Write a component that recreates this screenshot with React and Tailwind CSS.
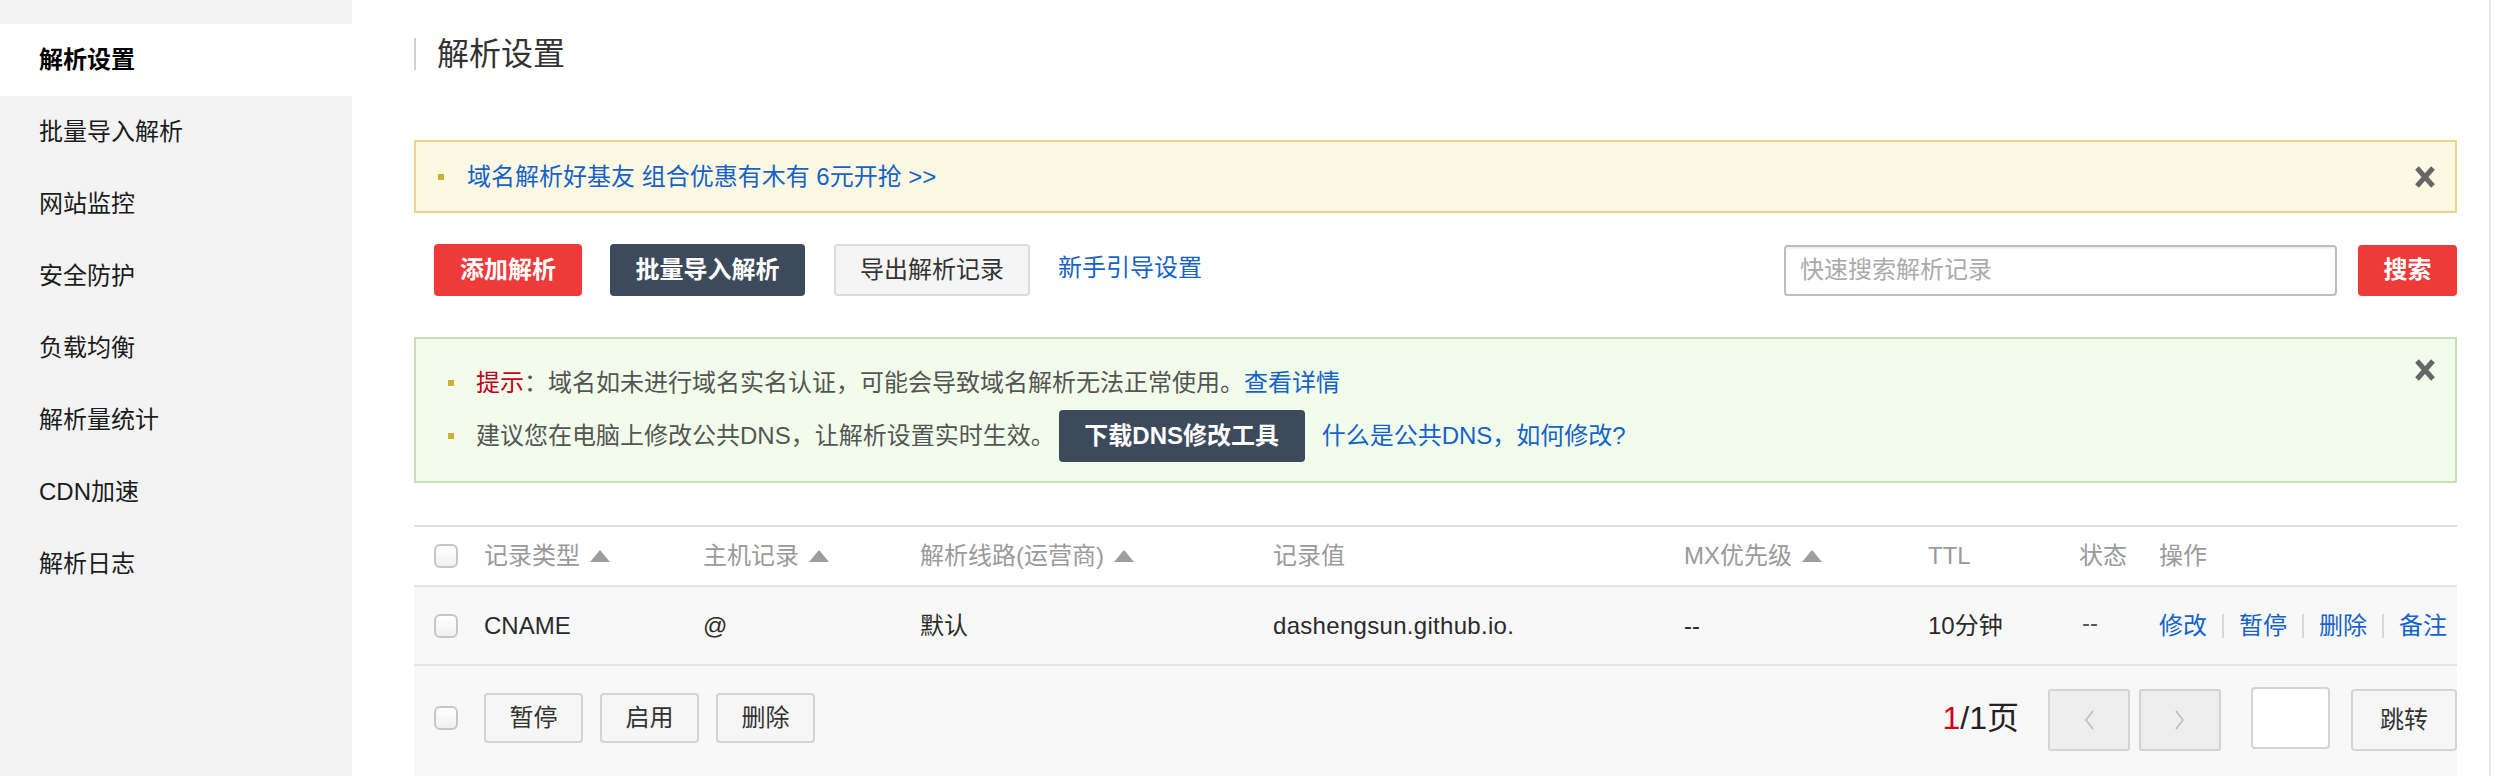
import React from "react";

const menu = ["解析设置", "批量导入解析", "网站监控", "安全防护", "负载均衡", "解析量统计", "CDN加速", "解析日志"];

const cols = "grid grid-cols-[70px_219px_217px_353px_411px_244px_151px_80px_1fr] items-center";

function SortUp() {
  return (
    <svg width="20" height="12" viewBox="0 0 20 12" className="ml-[10px] shrink-0">
      <path d="M10 0L20 12H0Z" fill="#9d9d9d" />
    </svg>
  );
}

function Box() {
  return <span className="block w-[24px] h-[24px] rounded-[6px] border-2 border-[#c6c6c6] bg-gradient-to-b from-white to-[#f0f0f0]" />;
}

function CloseX() {
  return (
    <svg width="22" height="24" viewBox="0 0 22 24" className="shrink-0">
      <path d="M3 3L19 21M19 3L3 21" stroke="#666" strokeWidth="5" />
    </svg>
  );
}

function Dot() {
  return <span className="block w-[6px] h-[6px] bg-[#d2ae35] shrink-0" />;
}

function Sep() {
  return <span className="block w-[2px] h-[24px] bg-[#d8d8d8] mx-[15px]" />;
}

export default function App() {
  return (
    <div className="flex w-[2502px] h-[776px] overflow-hidden bg-white text-[24px] leading-none text-[#333] font-['Liberation_Sans','Noto_Sans_CJK_SC',sans-serif]">
      <aside className="w-[352px] shrink-0 bg-[#f3f3f3] pt-[24px]">
        {menu.map((t, i) => (
          <div
            key={t}
            className={`h-[72px] flex items-center pl-[39px] ${i === 0 ? "bg-white font-bold text-black" : "text-[#1c1c1c]"}`}
          >
            {t}
          </div>
        ))}
      </aside>

      <main className="flex-1 pl-[62px] pr-[32px] pt-[38px]">
        <div className="border-l-2 border-[#d0d0d0] pl-[21px] h-[32px] text-[32px] leading-[32px] text-[#333]">解析设置</div>

        {/* promo banner */}
        <div className="mt-[70px] h-[73px] border-2 border-[#ebd48c] bg-[#fdf8e2] flex items-center pl-[22px] pr-[19px]">
          <Dot />
          <span className="ml-[23px] text-[#1562c9]">域名解析好基友 组合优惠有木有 6元开抢 &gt;&gt;</span>
          <span className="ml-auto">
            <CloseX />
          </span>
        </div>

        {/* toolbar */}
        <div className="mt-[31px] h-[52px] flex items-center pl-[20px]">
          <button className="h-[52px] w-[148px] shrink-0 rounded-[4px] bg-[#ef3a3a] text-white font-bold">添加解析</button>
          <button className="ml-[28px] h-[52px] w-[195px] shrink-0 rounded-[4px] bg-[#3c4a5b] text-white font-bold">批量导入解析</button>
          <button className="ml-[29px] h-[52px] w-[196px] shrink-0 rounded-[4px] bg-[#f5f5f5] border-2 border-[#dcdcdc] text-[#333]">导出解析记录</button>
          <a className="ml-[28px] text-[#1562c9] -mt-[4px]">新手引导设置</a>
          <div className="ml-auto flex items-center">
            <div className="w-[553px] h-[51px] rounded-[4px] border-2 border-[#bdbdbd] bg-white shadow-[inset_0_2px_2px_rgba(0,0,0,0.06)] flex items-center pl-[14px] text-[#ababab]">
              快速搜索解析记录
            </div>
            <button className="ml-[21px] h-[51px] w-[99px] rounded-[4px] bg-[#ef3a3a] text-white font-bold">搜索</button>
          </div>
        </div>

        {/* tips */}
        <div className="mt-[41px] border-2 border-[#c9dfb8] bg-[#f1fdea] pt-[18px] pb-[19px] pl-[32px] pr-[19px] flex">
          <div className="flex flex-col gap-[1px]">
            <div className="h-[52px] flex items-center">
              <Dot />
              <span className="ml-[22px] text-[#c4001c]">提示</span>
              <span className="text-[#555]">：域名如未进行域名实名认证，可能会导致域名解析无法正常使用。</span>
              <span className="text-[#1562c9]">查看详情</span>
            </div>
            <div className="h-[52px] flex items-center">
              <Dot />
              <span className="ml-[22px] text-[#555]">建议您在电脑上修改公共DNS，让解析设置实时生效。</span>
              <button className="ml-[4px] h-[52px] w-[246px] rounded-[4px] bg-[#3c4a5b] text-white font-bold">下载DNS修改工具</button>
              <span className="ml-[17px] text-[#1562c9]">什么是公共DNS，如何修改?</span>
            </div>
          </div>
          <div className="ml-auto mt-[1px]">
            <CloseX />
          </div>
        </div>

        {/* records table */}
        <div className="mt-[42px] border-t-2 border-[#dedede]">
          <div className={`${cols} h-[60px] text-[#9a9a9a] border-b-2 border-[#e4e4e4]`}>
            <div className="pl-[20px]"><Box /></div>
            <div className="flex items-center">记录类型<SortUp /></div>
            <div className="flex items-center">主机记录<SortUp /></div>
            <div className="flex items-center">解析线路(运营商)<SortUp /></div>
            <div>记录值</div>
            <div className="flex items-center">MX优先级<SortUp /></div>
            <div>TTL</div>
            <div>状态</div>
            <div>操作</div>
          </div>
          <div className={`${cols} h-[79px] bg-[#f8f8f8] border-b-2 border-[#e4e4e4] text-[#2b2b2b]`}>
            <div className="pl-[20px]"><Box /></div>
            <div>CNAME</div>
            <div>@</div>
            <div>默认</div>
            <div className="tracking-[0.3px]">dashengsun.github.io.</div>
            <div>--</div>
            <div>10分钟</div>
            <div className="pl-[3px] -mt-[6px] text-[#555]">--</div>
            <div className="flex items-center text-[#1562c9]">
              <span>修改</span><Sep /><span>暂停</span><Sep /><span>删除</span><Sep /><span>备注</span>
            </div>
          </div>
          <div className="h-[110px] bg-[#f8f8f8] pt-[21px] flex items-start">
            <div className="h-[62px] flex items-center pl-[20px]">
              <Box />
              <div className="ml-[26px] flex gap-[17px]">
                {["暂停", "启用", "删除"].map((t) => (
                  <button key={t} className="h-[50px] w-[99px] rounded-[4px] border-2 border-[#d4d4d4] bg-[#f6f6f6] text-[#333]">
                    {t}
                  </button>
                ))}
              </div>
            </div>
            <div className="ml-auto h-[62px] flex items-center">
              <span className="text-[32px] text-[#222]"><span className="text-[#d0021b]">1</span>/1页</span>
              <div className="ml-[29px] flex gap-[9px] mt-[4px]">
                {["M10 2L3 11L10 20", "M2 2L9 11L2 20"].map((d) => (
                  <div key={d} className="w-[82px] h-[62px] rounded-[3px] border-2 border-[#d4d4d4] bg-[#eeeeee] flex items-center justify-center">
                    <svg width="12" height="22" viewBox="0 0 12 22"><path d={d} fill="none" stroke="#bbb" strokeWidth="1.6" /></svg>
                  </div>
                ))}
              </div>
              <div className="ml-[30px] w-[79px] h-[62px] rounded-[4px] border-2 border-[#d4d4d4] bg-white" />
              <button className="ml-[21px] mt-[4px] w-[106px] h-[62px] rounded-[4px] border-2 border-[#d4d4d4] bg-[#f6f6f6] text-[#333]">跳转</button>
            </div>
          </div>
        </div>
      </main>

      <div className="w-[13px] shrink-0 border-l-2 border-[#e6e6e6] bg-white" />
    </div>
  );
}
